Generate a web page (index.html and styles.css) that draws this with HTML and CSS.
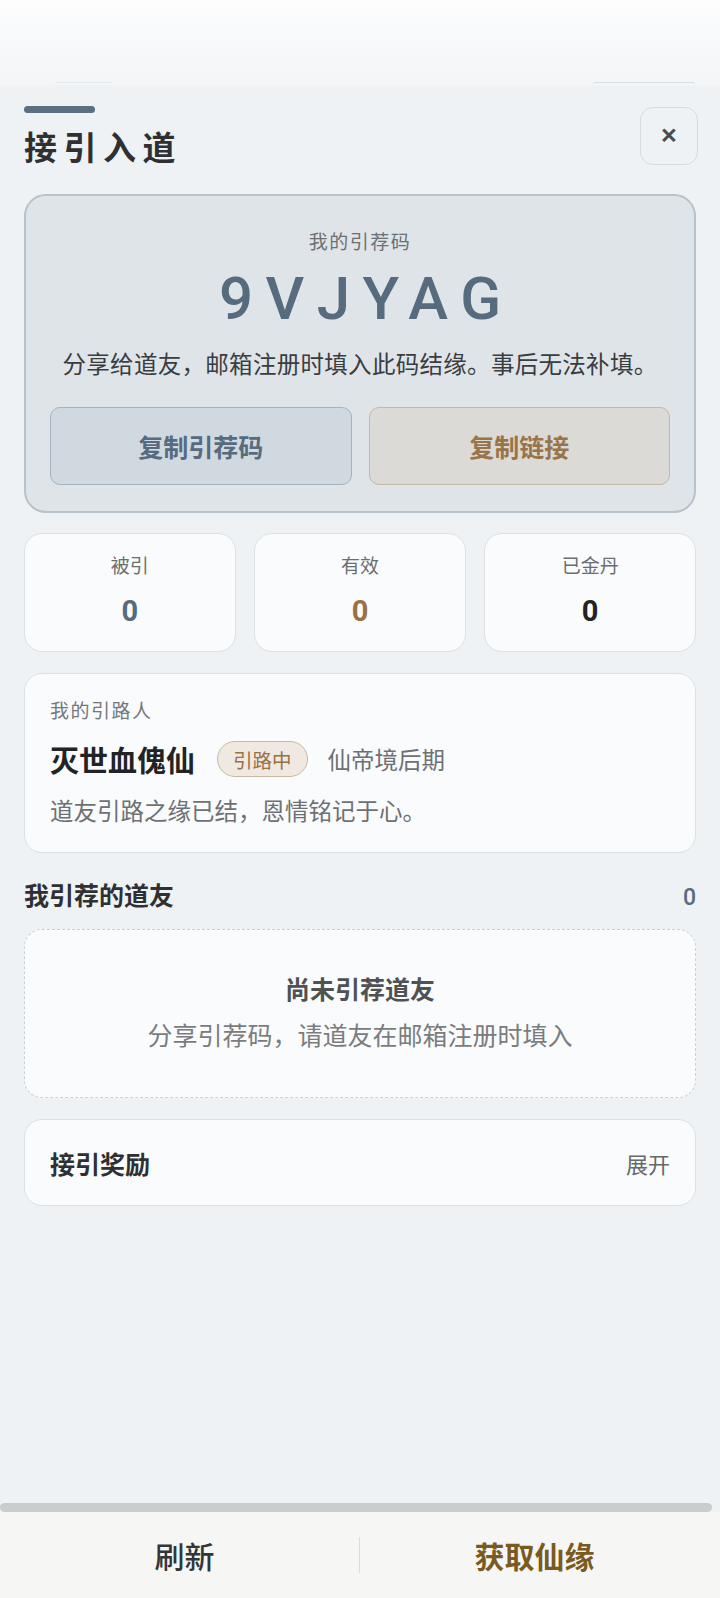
FILE: index.html
```html
<!DOCTYPE html>
<html lang="zh-CN">
<head>
<meta charset="utf-8">
<meta name="viewport" content="width=720">
<title>接引入道</title>
<link rel="stylesheet" href="styles.css">
</head>
<body>
<div class="page">
  <div class="backdrop">
    <div class="ghost ghost-left"></div>
    <div class="ghost ghost-right"></div>
  </div>
  <main class="sheet">
    <header class="sheet-head">
      <div class="head-left">
        <div class="handle"></div>
        <h1 class="title">接引入道</h1>
      </div>
      <button class="close-btn" aria-label="关闭">×</button>
    </header>

    <section class="code-card">
      <div class="code-label">我的引荐码</div>
      <div class="code-value">9VJYAG</div>
      <p class="code-desc">分享给道友，邮箱注册时填入此码结缘。事后无法补填。</p>
      <div class="code-actions">
        <button class="btn btn-code">复制引荐码</button>
        <button class="btn btn-link">复制链接</button>
      </div>
    </section>

    <section class="stats">
      <div class="stat">
        <div class="stat-label">被引</div>
        <div class="stat-num num-blue">0</div>
      </div>
      <div class="stat">
        <div class="stat-label">有效</div>
        <div class="stat-num num-gold">0</div>
      </div>
      <div class="stat">
        <div class="stat-label">已金丹</div>
        <div class="stat-num num-dark">0</div>
      </div>
    </section>

    <section class="card inviter">
      <div class="inviter-label">我的引路人</div>
      <div class="inviter-row">
        <span class="inviter-name">灭世血傀仙</span>
        <span class="badge">引路中</span>
        <span class="inviter-rank">仙帝境后期</span>
      </div>
      <p class="inviter-desc">道友引路之缘已结，恩情铭记于心。</p>
    </section>

    <div class="section-head">
      <h2 class="section-title">我引荐的道友</h2>
      <span class="section-count">0</span>
    </div>

    <section class="empty">
      <div class="empty-title">尚未引荐道友</div>
      <div class="empty-sub">分享引荐码，请道友在邮箱注册时填入</div>
    </section>

    <section class="card reward">
      <span class="reward-title">接引奖励</span>
      <span class="reward-toggle">展开</span>
    </section>

    <div class="spacer"></div>
    <div class="scrollbar"></div>
  </main>
  <footer class="bottom-bar">
    <button class="bar-btn bar-refresh">刷新</button>
    <span class="bar-divider"></span>
    <button class="bar-btn bar-get">获取仙缘</button>
  </footer>
</div>
</body>
</html>
```

FILE: styles.css
```css
* { box-sizing: border-box; }

html, body {
  margin: 0;
  padding: 0;
}

body {
  font-family: Roboto, "Noto Sans CJK SC", sans-serif;
  color: #2f3133;
  background: #eef2f5;
}

button {
  font-family: inherit;
  border: none;
  background: none;
  padding: 0;
  margin: 0;
  cursor: pointer;
}

h1, h2, p { margin: 0; }

.page {
  width: 720px;
  min-height: 1598px;
  display: flex;
  flex-direction: column;
  overflow: hidden;
}

.backdrop {
  height: 85px;
  flex: none;
  background: linear-gradient(#fdfdfe, #f3f5f7);
  display: flex;
  justify-content: space-between;
  align-items: flex-end;
  padding: 0 25px 0 55px;
}

.ghost {
  height: 3px;
  border-top: 1.5px solid #d9dde0;
  border-radius: 8px 8px 0 0;
}
.ghost-left { width: 58px; border-color: #e6e9eb; }
.ghost-right { width: 102px; }

.sheet {
  flex: 1;
  display: flex;
  flex-direction: column;
  background: #eef2f5;
  padding: 21px 24px 0;
}

.sheet-head {
  display: flex;
  justify-content: space-between;
  align-items: flex-start;
}

.handle {
  width: 71px;
  height: 7px;
  border-radius: 4px;
  background: #5b6f82;
}

.title {
  margin-top: 16px;
  font-size: 33px;
  line-height: 40px;
  font-weight: 700;
  letter-spacing: 6.5px;
  color: #2e3032;
}

.close-btn {
  margin-top: 1px;
  margin-right: -2px;
  width: 58px;
  height: 58px;
  border: 1.5px solid #d6dbdf;
  border-radius: 13px;
  background: #eff2f4;
  color: #4a4d50;
  font-size: 30px;
  line-height: 1;
  font-weight: 500;
  display: flex;
  align-items: center;
  justify-content: center;
  padding-bottom: 3px;
}

.code-card {
  margin-top: 25px;
  background: #dfe4e9;
  border: 2px solid #b8c2cb;
  border-radius: 22px;
  padding: 34px 24px 26px;
  display: flex;
  flex-direction: column;
  align-items: center;
}

.code-label {
  font-size: 19px;
  line-height: 26px;
  letter-spacing: 1.5px;
  color: #6c7073;
}

.code-value {
  margin-top: 15px;
  font-family: Roboto, sans-serif;
  font-weight: 500;
  font-size: 60px;
  line-height: 56px;
  letter-spacing: 12.5px;
  padding-left: 12.5px;
  color: #566b7e;
}

.code-desc {
  margin-top: 22px;
  font-size: 23.5px;
  line-height: 32px;
  letter-spacing: 0.3px;
  color: #3a3d40;
  white-space: nowrap;
}

.code-actions {
  margin-top: 26px;
  width: 100%;
  display: grid;
  grid-template-columns: 1fr 1fr;
  gap: 17px;
}

.btn {
  height: 78px;
  border-radius: 10px;
  font-size: 25px;
  font-weight: 700;
}

.btn-code {
  background: #d0d8e0;
  border: 1.5px solid #a6b3be;
  color: #566b7e;
}

.btn-link {
  background: #dbdad7;
  border: 1.5px solid #c5b7a7;
  color: #9a7449;
}

.stats {
  margin-top: 20px;
  display: grid;
  grid-template-columns: repeat(3, 1fr);
  gap: 18.5px;
}

.stat {
  height: 119px;
  background: #f9fbfc;
  border: 1.5px solid #dce1e5;
  border-radius: 18px;
  padding-top: 20px;
  display: flex;
  flex-direction: column;
  align-items: center;
}

.stat-label {
  font-size: 19px;
  line-height: 26px;
  color: #6b6d6f;
}

.stat-num {
  margin-top: 14px;
  font-size: 29px;
  line-height: 34px;
  font-weight: 700;
}

.num-blue { color: #566b7e; }
.num-gold { color: #9a7045; }
.num-dark { color: #222324; }

.card {
  background: #f9fbfc;
  border: 1.5px solid #dce1e5;
  border-radius: 18px;
}

.inviter {
  margin-top: 21px;
  padding: 25px 25px 24px;
}

.inviter-label {
  font-size: 19px;
  line-height: 26px;
  letter-spacing: 1.5px;
  color: #75777a;
}

.inviter-row {
  margin-top: 16px;
  height: 36px;
  display: flex;
  align-items: center;
}

.inviter-name {
  font-size: 29px;
  font-weight: 700;
  color: #222324;
}

.badge {
  margin-left: 22px;
  height: 36px;
  padding: 0 15px;
  border: 1.5px solid #cbb8a0;
  border-radius: 18px;
  background: #efe9e2;
  color: #9a7045;
  font-size: 19.5px;
  display: flex;
  align-items: center;
}

.inviter-rank {
  margin-left: 20px;
  font-size: 23.5px;
  color: #6e7073;
}

.inviter-desc {
  margin-top: 19px;
  font-size: 23.5px;
  line-height: 32px;
  color: #6e7073;
}

.section-head {
  margin-top: 28px;
  display: flex;
  justify-content: space-between;
  align-items: center;
}

.section-title {
  font-size: 25px;
  line-height: 32px;
  font-weight: 700;
  color: #2e3032;
}

.section-count {
  font-size: 23px;
  font-weight: 500;
  color: #566b7e;
}

.empty {
  margin-top: 16px;
  height: 169px;
  background: #f9fbfc;
  border: 1.5px dashed #c9d0d6;
  border-radius: 18px;
  display: flex;
  flex-direction: column;
  align-items: center;
  justify-content: center;
  gap: 14px;
}

.empty-title {
  font-size: 25px;
  line-height: 32px;
  font-weight: 700;
  color: #4f5153;
}

.empty-sub {
  font-size: 25px;
  line-height: 32px;
  color: #7a7c7e;
}

.reward {
  margin-top: 21px;
  height: 87px;
  padding: 0 25px;
  display: flex;
  justify-content: space-between;
  align-items: center;
}

.reward-title {
  font-size: 25px;
  font-weight: 700;
  color: #2e3032;
}

.reward-toggle {
  font-size: 22px;
  color: #66686b;
}

.spacer { flex: 1; }

.scrollbar {
  margin: 0 -24px;
  width: 712px;
  height: 9px;
  border-radius: 5px;
  background: #c9cdd0;
}

.bottom-bar {
  flex: none;
  height: 86px;
  background: #f6f7f5;
  display: flex;
  align-items: center;
}

.bar-btn {
  flex: 1;
  height: 100%;
  font-size: 30px;
}

.bar-refresh {
  color: #333537;
  font-weight: 500;
  padding-left: 10px;
}

.bar-get {
  color: #7b5a1f;
  font-weight: 700;
  padding-right: 11px;
}

.bar-divider {
  width: 1px;
  height: 36px;
  background: #dcdddb;
}
```
